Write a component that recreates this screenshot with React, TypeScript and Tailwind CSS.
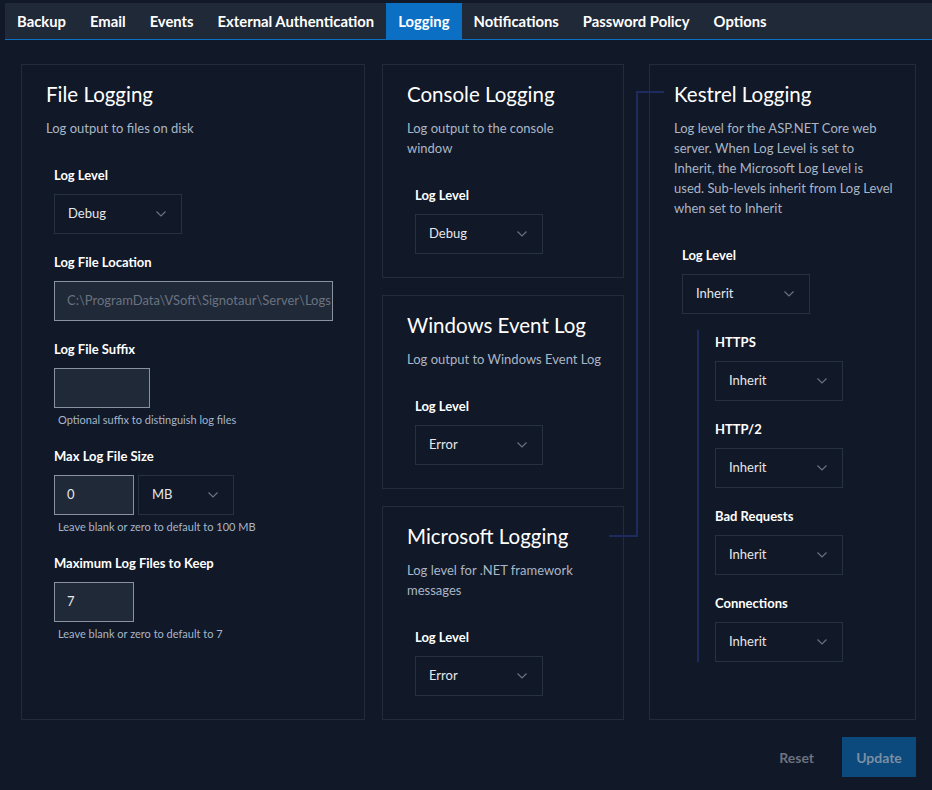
import React from "react";

const tabs = [
  "Backup",
  "Email",
  "Events",
  "External Authentication",
  "Logging",
  "Notifications",
  "Password Policy",
  "Options",
];

function Chevron() {
  return (
    <svg width="10" height="6" viewBox="0 0 10 6" className="shrink-0">
      <polyline
        points="0.5,0.5 5,5 9.5,0.5"
        fill="none"
        stroke="#6b7280"
        strokeWidth="1.2"
      />
    </svg>
  );
}

function Select({ value, w = "w-[128px]" }: { value: string; w?: string }) {
  return (
    <div
      className={`${w} h-10 flex items-center justify-between pl-[13px] pr-[15px] border border-[#263142] text-[13px] text-[#e5e7eb]`}
    >
      <span>{value}</span>
      <Chevron />
    </div>
  );
}

function TextBox({ value, w, muted }: { value: string; w: string; muted?: boolean }) {
  return (
    <div
      className={`${w} h-10 flex items-center pl-3 bg-[#1f2937] border border-[#8a929e] text-[13px] overflow-hidden whitespace-nowrap ${
        muted ? "text-[#6b7280]" : "text-[#e5e7eb]"
      }`}
    >
      {value}
    </div>
  );
}

function Field({
  label,
  help,
  children,
}: {
  label: string;
  help?: string;
  children: React.ReactNode;
}) {
  return (
    <div className="flex flex-col">
      <div className="text-[13px] leading-5 font-bold text-white mb-[9px]">{label}</div>
      {children}
      {help && <div className="mt-1 pl-1 text-[11px] leading-4 text-[#a7b6c9]">{help}</div>}
    </div>
  );
}

function Card({
  title,
  desc,
  descClass = "",
  className = "",
  children,
}: {
  title: string;
  desc: React.ReactNode;
  descClass?: string;
  className?: string;
  children: React.ReactNode;
}) {
  return (
    <div className={`border border-[#222c3b] pt-[15px] pb-[23px] px-6 ${className}`}>
      <h2 className="text-[20.5px] leading-7 text-white whitespace-nowrap">{title}</h2>
      <p className={`mt-[10px] text-[13px] leading-5 text-[#aab6c6] ${descClass}`}>{desc}</p>
      <div className="mt-[27px] ml-2 flex flex-col gap-[18px]">{children}</div>
    </div>
  );
}

export default function App() {
  return (
    <div
      className="min-h-[790px] bg-[#111827] pt-[3px] pl-[5px]"
      style={{ fontFamily: "Lato, 'Noto Sans', sans-serif" }}
    >
      <div className="flex h-[37px] bg-[#1f2937] border-b border-[#0b6fc4]">
        {tabs.map((t) => (
          <div
            key={t}
            className={`px-3 flex items-center text-[14.8px] font-bold text-white ${
              t === "Logging" ? "bg-[#0b6fc4]" : ""
            }`}
          >
            {t}
          </div>
        ))}
      </div>

      <div className="px-4 mt-6">
        <div className="relative flex">
          <Card
            title="File Logging"
            desc="Log output to files on disk"
            className="w-[344px] shrink-0"
          >
            <Field label="Log Level">
              <Select value="Debug" />
            </Field>
            <Field label="Log File Location">
              <TextBox value="C:\ProgramData\VSoft\Signotaur\Server\Logs" w="w-[279px]" muted />
            </Field>
            <Field label="Log File Suffix" help="Optional suffix to distinguish log files">
              <TextBox value="" w="w-[96px]" />
            </Field>
            <Field label="Max Log File Size" help="Leave blank or zero to default to 100 MB">
              <div className="flex gap-1">
                <TextBox value="0" w="w-[80px]" />
                <Select value="MB" w="w-[96px]" />
              </div>
            </Field>
            <Field label="Maximum Log Files to Keep" help="Leave blank or zero to default to 7">
              <TextBox value="7" w="w-[80px]" />
            </Field>
          </Card>

          <div className="ml-[17px] w-[242px] shrink-0 flex flex-col gap-[17px]">
            <Card title="Console Logging" desc="Log output to the console window">
              <Field label="Log Level">
                <Select value="Debug" />
              </Field>
            </Card>
            <Card
              title="Windows Event Log"
              desc="Log output to Windows Event Log"
              descClass="whitespace-nowrap"
            >
              <Field label="Log Level">
                <Select value="Error" />
              </Field>
            </Card>
            <Card title="Microsoft Logging" desc="Log level for .NET framework messages">
              <Field label="Log Level">
                <Select value="Error" />
              </Field>
            </Card>
          </div>

          <Card
            title="Kestrel Logging"
            desc={
              <>
                Log level for the ASP.NET Core web
                <br />
                server. When Log Level is set to
                <br />
                Inherit, the Microsoft Log Level is
                <br />
                used. Sub-levels inherit from Log Level
                <br />
                when set to Inherit
              </>
            }
            descClass="whitespace-nowrap"
            className="ml-[25px] flex-1 min-w-0"
          >
            <div>
              <Field label="Log Level">
                <Select value="Inherit" />
              </Field>
              <div className="mt-4 ml-[15px] border-l-2 border-[#1e2b5c] pl-4 pt-[2px] flex flex-col gap-[18px]">
                <Field label="HTTPS">
                  <Select value="Inherit" />
                </Field>
                <Field label="HTTP/2">
                  <Select value="Inherit" />
                </Field>
                <Field label="Bad Requests">
                  <Select value="Inherit" />
                </Field>
                <Field label="Connections">
                  <Select value="Inherit" />
                </Field>
              </div>
            </div>
          </Card>

          {/* connector from Microsoft Logging to Kestrel Logging */}
          <div className="absolute left-[615px] top-[27px] w-[28px] h-[446px] border-l-2 border-t-2 border-[#1e2b5c]" />
          <div className="absolute left-[588px] top-[471px] w-[29px] h-[2px] bg-[#1e2b5c]" />
        </div>

        <div className="flex justify-end items-center gap-3 mt-[17px]">
          <button className="h-10 px-4 text-[14px] font-bold text-[#6b7280]">Reset</button>
          <button className="h-10 w-[74px] bg-[#0c4a7d] text-[14px] font-bold text-[#7a8fa3]">
            Update
          </button>
        </div>
      </div>
    </div>
  );
}
